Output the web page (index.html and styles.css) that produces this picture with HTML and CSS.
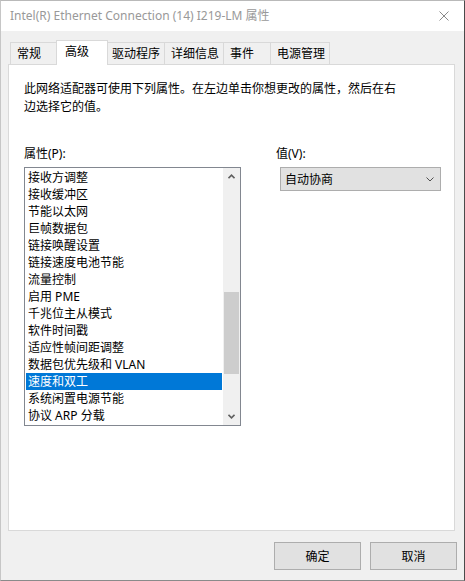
FILE: index.html
```html
<!DOCTYPE html>
<html lang="zh-CN">
<head>
<meta charset="utf-8">
<title>属性</title>
<link rel="stylesheet" href="styles.css">
</head>
<body>
<div class="window">
  <div class="titlebar">
    <span class="title">Intel(R) Ethernet Connection (14) I219-LM 属性</span>
    <svg class="close" width="10" height="10" viewBox="0 0 10 10"><path d="M0.5 0.5L9.5 9.5M9.5 0.5L0.5 9.5" stroke="#8a8a8a" stroke-width="1" fill="none"/></svg>
  </div>
  <div class="content">
    <div class="tabs">
      <div class="tab">常规</div>
      <div class="tab selected">高级</div>
      <div class="tab">驱动程序</div>
      <div class="tab">详细信息</div>
      <div class="tab">事件</div>
      <div class="tab">电源管理</div>
    </div>
    <div class="panel">
      <p class="desc">此网络适配器可使用下列属性。在左边单击你想更改的属性，然后在右<br>边选择它的值。</p>
      <div class="columns">
        <div class="col-left">
          <div class="label">属性(P):</div>
          <div class="listbox">
            <ul class="items">
              <li>接收方调整</li>
              <li>接收缓冲区</li>
              <li>节能以太网</li>
              <li>巨帧数据包</li>
              <li>链接唤醒设置</li>
              <li>链接速度电池节能</li>
              <li>流量控制</li>
              <li>启用 PME</li>
              <li>千兆位主从模式</li>
              <li>软件时间戳</li>
              <li>适应性帧间距调整</li>
              <li>数据包优先级和 VLAN</li>
              <li class="active">速度和双工</li>
              <li>系统闲置电源节能</li>
              <li>协议 ARP 分载</li>
            </ul>
            <div class="scrollbar">
              <div class="sb-btn"><svg width="7" height="5" viewBox="0 0 7 5"><path d="M0.5 4.2L3.5 1.2L6.5 4.2" stroke="#606060" stroke-width="1.6" fill="none"/></svg></div>
              <div class="sb-track"><div class="sb-thumb"></div></div>
              <div class="sb-btn"><svg width="7" height="5" viewBox="0 0 7 5"><path d="M0.5 0.8L3.5 3.8L6.5 0.8" stroke="#606060" stroke-width="1.6" fill="none"/></svg></div>
            </div>
          </div>
        </div>
        <div class="col-right">
          <div class="label">值(V):</div>
          <div class="combo">
            <span>自动协商</span>
            <svg width="8" height="5" viewBox="0 0 8 5"><path d="M0.5 0.5L4 4L7.5 0.5" stroke="#505050" stroke-width="1" fill="none"/></svg>
          </div>
        </div>
      </div>
    </div>
    <div class="buttons">
      <button class="btn">确定</button>
      <button class="btn">取消</button>
    </div>
  </div>
</div>
</body>
</html>
```

FILE: styles.css
```css
* { box-sizing: border-box; }
html, body { margin: 0; padding: 0; }
body {
  font-family: "Noto Sans", "Noto Sans CJK SC", sans-serif;
  font-size: 12px;
  color: #000;
  background: #2b2b2b;
}
.window {
  width: 465px;
  height: 581px;
  background: #f0f0f0;
  border-top: 1px solid #b9b9b9;
  border-left: 1px solid #c6c6c6;
  border-right: 1px solid #4a4a4a;
  border-bottom: 1px solid #8a8a8a;
  display: flex;
  flex-direction: column;
}
.titlebar {
  height: 30px;
  background: #fff;
  display: flex;
  align-items: center;
  justify-content: space-between;
  padding: 0 15px 0 9px;
}
.title {
  color: #999;
  font-size: 12px;
  line-height: 16px;
}
.content {
  padding: 9px 7px 0 7px;
  display: flex;
  flex-direction: column;
}
.tabs {
  display: flex;
  align-items: flex-end;
  height: 24px;
  padding-left: 2px;
  position: relative;
  z-index: 1;
}
.tab {
  height: 22px;
  line-height: 21px;
  min-width: 48px;
  padding: 0 4px 0 6px;
  background: #f0f0f0;
  border: 1px solid #d9d9d9;
  border-bottom: none;
  margin-left: -1px;
  white-space: nowrap;
}
.tab:first-child { margin-left: 0; }
.tab.selected {
  height: 25px;
  margin: 0 -2px -1px -2px;
  padding: 0 6px 3px 8px;
  background: #fff;
  line-height: 21px;
  position: relative;
  z-index: 2;
  min-width: 52px;
}
.panel {
  background: #fff;
  border: 1px solid #d9d9d9;
  height: 467px;
  margin-right: 2px;
  padding: 15px 15px 0 15px;
}
.desc {
  margin: 0;
  line-height: 18px;
}
.columns {
  display: flex;
  margin-top: 29px;
}
.label {
  line-height: 18px;
  margin-bottom: 4px;
}
.col-left { width: 217px; }
.col-right {
  margin-left: 35px;
}
.listbox {
  width: 217px;
  height: 259px;
  border: 1px solid #828790;
  display: flex;
}
.items {
  list-style: none;
  margin: 0;
  padding: 1px;
  flex: 1;
  overflow: hidden;
}
.items li {
  height: 17px;
  line-height: 17px;
  padding-left: 2px;
  white-space: nowrap;
}
.items li.active {
  background: #0078d7;
  color: #fff;
}
.scrollbar {
  width: 17px;
  background: #f0f0f0;
  display: flex;
  flex-direction: column;
}
.sb-btn {
  height: 17px;
  display: flex;
  align-items: center;
  justify-content: center;
}
.sb-track {
  flex: 1;
  padding: 107px 1px 0 1px;
}
.sb-thumb {
  height: 82px;
  background: #cdcdcd;
}
.combo {
  width: 161px;
  height: 24px;
  margin-left: 4px;
  background: #e1e1e1;
  border: 1px solid #adadad;
  display: flex;
  align-items: center;
  justify-content: space-between;
  padding: 0 6px 0 4px;
}
.buttons {
  display: flex;
  justify-content: flex-end;
  gap: 9px;
  margin-top: 11px;
}
.btn {
  width: 87px;
  height: 28px;
  background: #e1e1e1;
  border: 1px solid #adadad;
  font-family: "Noto Sans", "Noto Sans CJK SC", sans-serif;
  font-size: 12px;
  color: #000;
  padding: 0;
  border-radius: 0;
}
```
